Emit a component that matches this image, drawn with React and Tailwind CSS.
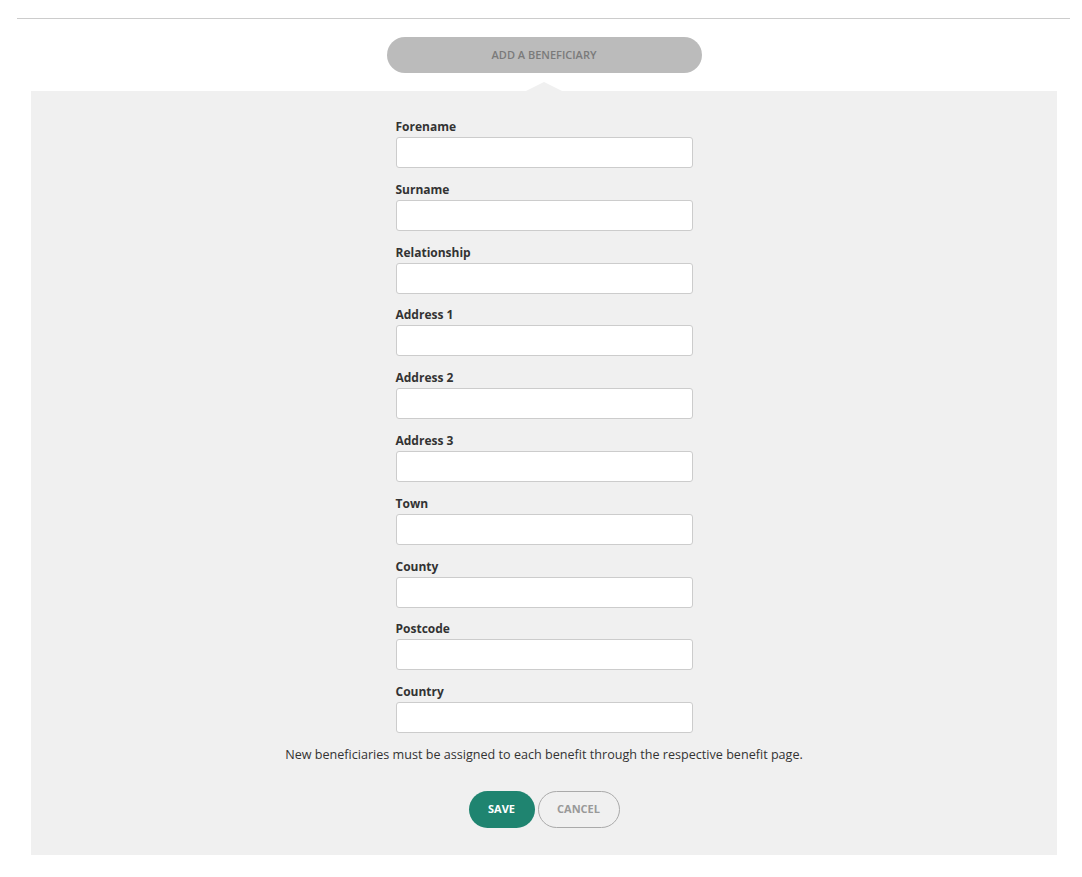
const FIELDS = [
  'Forename',
  'Surname',
  'Relationship',
  'Address 1',
  'Address 2',
  'Address 3',
  'Town',
  'County',
  'Postcode',
  'Country',
];

function Field({ label }) {
  return (
    <div className="flex flex-col">
      <label className="text-[12px] font-bold leading-[16px] text-[#333] mb-[2px]">{label}</label>
      <input
        type="text"
        className="w-[297px] h-[31px] bg-white border border-[#ccc] rounded-[3px] px-2 text-[13px] outline-none"
      />
    </div>
  );
}

export default function App() {
  return (
    <div className="min-h-screen bg-white font-['Open_Sans',sans-serif] text-[#333]">
      <div className="pt-[18px] px-[17px] pr-[12px]">
        <div className="border-t border-[#ccc]" />
      </div>

      <div className="mx-[31px] w-[1026px]">
        <div className="flex flex-col items-center pt-[18px]">
          <button className="w-[315px] h-[36px] rounded-full bg-[#bbb] text-[#7a7a7a] text-[11px] font-semibold uppercase">
            Add a beneficiary
          </button>
        </div>

        <div className="flex justify-center mt-[9px]">
          <div className="w-0 h-0 border-l-[18px] border-r-[18px] border-b-[9px] border-l-transparent border-r-transparent border-b-[#f0f0f0]" />
        </div>
        <div className="bg-[#f0f0f0] pt-[28px] pb-[27px] flex flex-col items-center">
          <div className="flex flex-col gap-[13.8px]">
            {FIELDS.map(f => <Field key={f} label={f} />)}
          </div>

          <p className="text-[12.6px] text-[#333] mt-[13px]">
            New beneficiaries must be assigned to each benefit through the respective benefit page.
          </p>

          <div className="flex gap-[3px] mt-[26px]">
            <button className="w-[66px] h-[37px] rounded-full bg-[#1f8470] text-white text-[11px] font-bold">
              SAVE
            </button>
            <button className="w-[82px] h-[37px] rounded-full border border-[#aaa] text-[#999] text-[11px] font-bold">
              CANCEL
            </button>
          </div>
        </div>
      </div>
    </div>
  );
}
